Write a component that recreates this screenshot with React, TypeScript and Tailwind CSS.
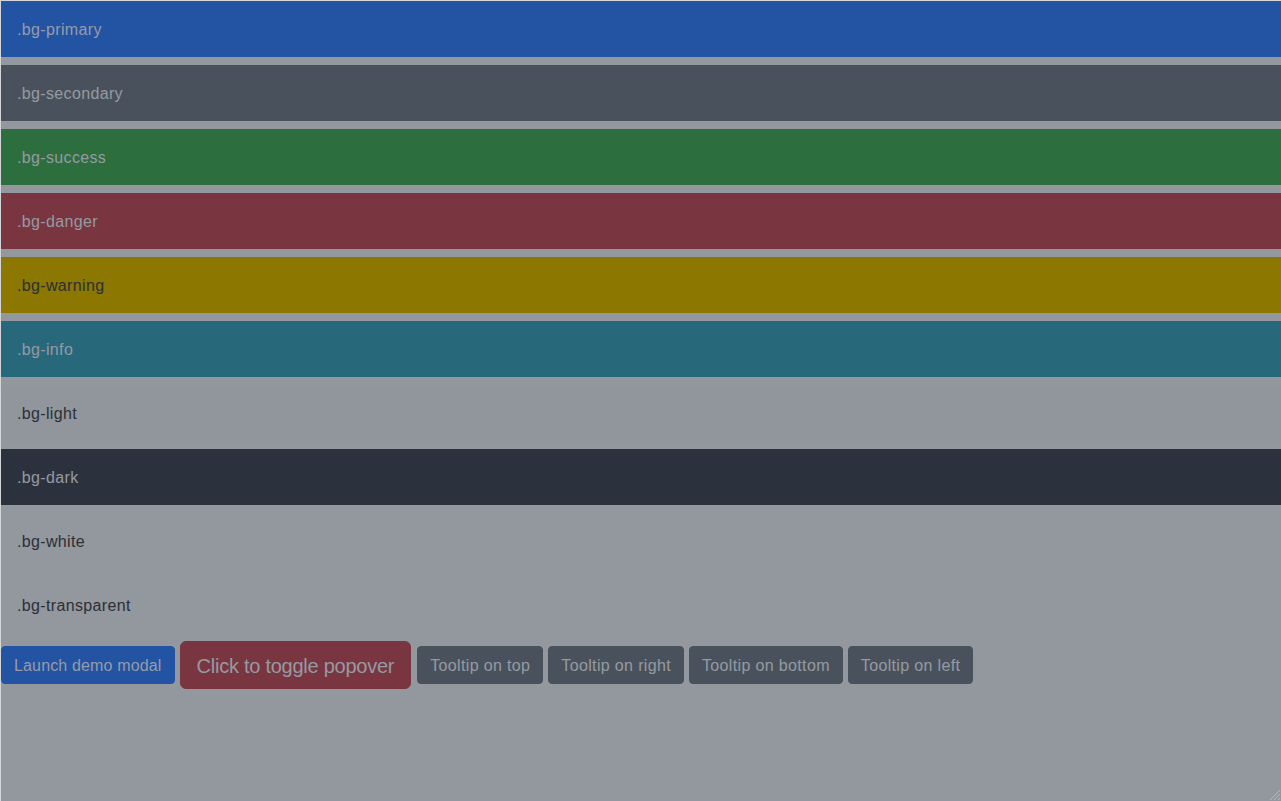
const rows = [
  { label: ".bg-primary", cls: "bg-[#2353a3] text-[#969ca8]" },
  { label: ".bg-secondary", cls: "bg-[#49525c] text-[#959aa2]" },
  { label: ".bg-success", cls: "bg-[#2d6e3e] text-[#959aa2]" },
  { label: ".bg-danger", cls: "bg-[#7a3640] text-[#959aa2]" },
  { label: ".bg-warning", cls: "bg-[#8c7700] text-[#2b3038]" },
  { label: ".bg-info", cls: "bg-[#28687b] text-[#959aa2]" },
  { label: ".bg-light", cls: "bg-[#91959c] text-[#2b3038]" },
  { label: ".bg-dark", cls: "bg-[#2c323d] text-[#959aa2]" },
  { label: ".bg-white", cls: "bg-[#93979e] text-[#2b3038]" },
  { label: ".bg-transparent", cls: "text-[#2b3038]" },
]

const tooltips = ["Tooltip on top", "Tooltip on right", "Tooltip on bottom", "Tooltip on left"]

export default function App() {
  return (
    <div
      className="relative h-[801px] w-full overflow-hidden border-l border-t border-[#d4d6d9] bg-[#93979e]"
      style={{ fontFamily: "'Liberation Sans', Arial, sans-serif" }}
    >
      {rows.map((r) => (
        <div key={r.label} className={`mb-2 px-4 pt-[17px] pb-[15px] text-base leading-6 tracking-[0.35px] ${r.cls}`}>
          {r.label}
        </div>
      ))}
      <div className="flex items-center gap-[5px]">
        <button className="rounded-[4px] border border-[#2353a3] bg-[#2353a3] px-3 pt-[7px] pb-[5px] text-base leading-6 tracking-[0.15px] text-[#969ca8]">
          Launch demo modal
        </button>
        <button className="mr-px rounded-[6px] border border-[#7a3640] bg-[#7a3640] px-4 pt-[9px] pb-[7px] text-xl leading-[30px] tracking-[-0.25px] text-[#959aa2]">
          Click to toggle popover
        </button>
        {tooltips.map((t) => (
          <button
            key={t}
            className="rounded-[4px] border border-[#49525c] bg-[#49525c] px-3 pt-[7px] pb-[5px] text-base leading-6 tracking-[0.35px] text-[#959aa2]"
          >
            {t}
          </button>
        ))}
      </div>
      <svg className="absolute bottom-0 right-0" width="14" height="14" viewBox="0 0 14 14">
        <path d="M13 3 L3 13 M13 7 L7 13 M13 11 L11 13" stroke="#b4b7bc" strokeWidth="1" />
      </svg>
    </div>
  )
}
